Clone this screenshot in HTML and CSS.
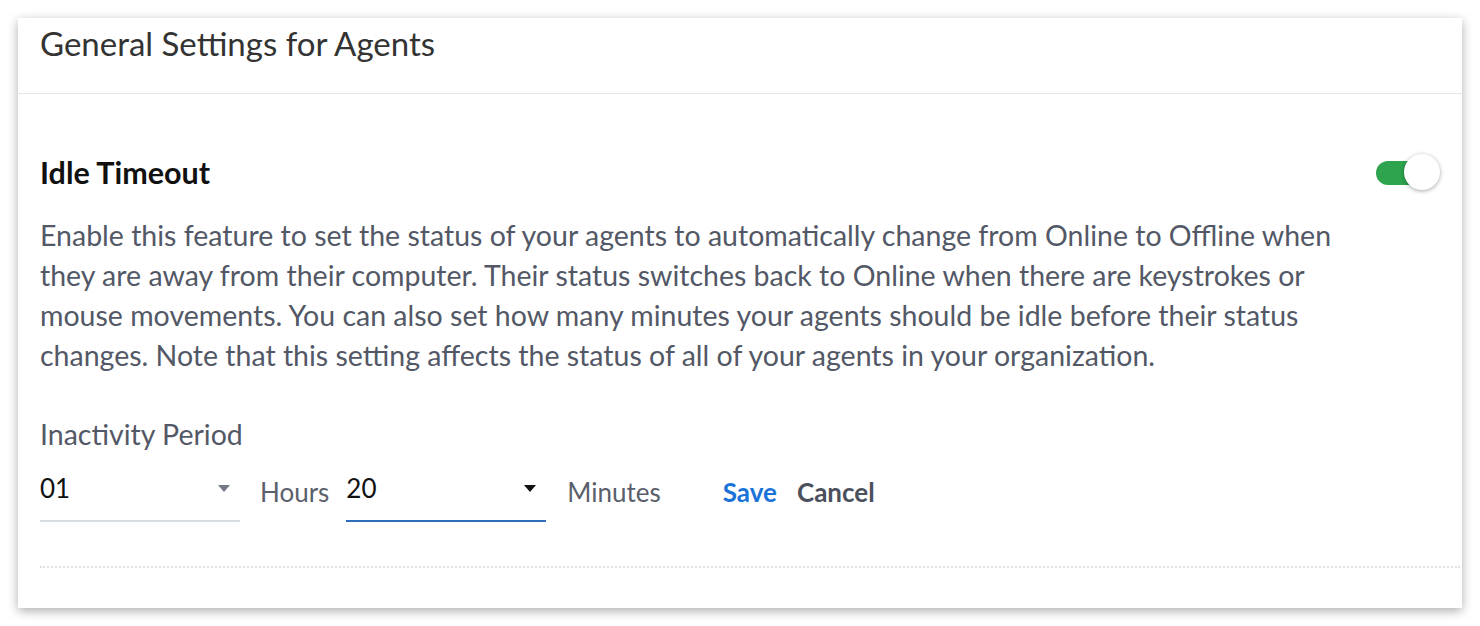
FILE: index.html
```html
<!DOCTYPE html>
<html>
<head>
<meta charset="utf-8">
<link rel="stylesheet" href="styles.css">
</head>
<body>
<div class="card">
  <div class="card-header">
    <h1 class="title">General Settings for Agents</h1>
  </div>
  <div class="card-body">
    <div class="setting-row">
      <h2 class="setting-title">Idle Timeout</h2>
      <div class="toggle">
        <span class="toggle-track"></span>
        <span class="toggle-knob"></span>
      </div>
    </div>
    <p class="desc">Enable this feature to set the status of your agents to automatically change from Online to Offline when they are away from their computer. Their status switches back to Online when there are keystrokes or mouse movements. You can also set how many minutes your agents should be idle before their status changes. Note that this setting affects the status of all of your agents in your organization.</p>
    <div class="field-label">Inactivity Period</div>
    <div class="input-row">
      <div class="select">
        <span class="select-value">01</span>
        <span class="arrow arrow-muted"></span>
      </div>
      <span class="unit unit-hours">Hours</span>
      <div class="select select-active">
        <span class="select-value">20</span>
        <span class="arrow"></span>
      </div>
      <span class="unit unit-minutes">Minutes</span>
      <a class="btn-link btn-save">Save</a>
      <a class="btn-link btn-cancel">Cancel</a>
    </div>
    <div class="dotted"></div>
  </div>
</div>
</body>
</html>
```

FILE: styles.css
```css
* { box-sizing: border-box; }
html, body { margin: 0; padding: 0; background: #ffffff; }
body {
  padding: 18px;
  font-family: Lato, "Noto Sans", "Liberation Sans", sans-serif;
}
.card {
  width: 1444px;
  height: 590px;
  background: #ffffff;
  box-shadow: 0 3px 10px rgba(0, 0, 0, 0.32);
}
.card-header {
  height: 76px;
  padding: 5px 22px 0 22px;
  border-bottom: 1px solid #e6e6e6;
}
.title {
  margin: 0;
  font-size: 33px;
  line-height: 40px;
  font-weight: 400;
  color: #333333;
}
.card-body {
  padding: 60px 22px 0 22px;
}
.setting-row {
  display: flex;
  justify-content: space-between;
  align-items: center;
  height: 36px;
}
.setting-title {
  margin: 0;
  font-size: 30.5px;
  line-height: 36px;
  font-weight: 700;
  color: #111111;
}
.toggle {
  position: relative;
  width: 64px;
  height: 36px;
}
.toggle-track {
  display: block;
  width: 59px;
  height: 24px;
  margin-top: 7px;
  border-radius: 12px;
  background: #2ea44f;
}
.toggle-knob {
  position: absolute;
  right: 0;
  top: 0;
  width: 36px;
  height: 36px;
  border-radius: 50%;
  background: #ffffff;
  box-shadow: 0 1px 4px rgba(0, 0, 0, 0.35);
}
.desc {
  margin: 25px 0 0 0;
  font-size: 28.5px;
  line-height: 40px;
  color: #535866;
  max-width: 1320px;
}
.field-label {
  margin-top: 42px;
  font-size: 28.5px;
  line-height: 34px;
  color: #535866;
}
.input-row {
  display: flex;
  align-items: flex-start;
  margin-top: 18px;
}
.select {
  display: flex;
  align-items: center;
  justify-content: space-between;
  width: 200px;
  height: 53px;
  padding: 0 10px 13px 0;
  border-bottom: 2px solid #d7dce1;
  align-self: flex-start;
}
.select-active { border-bottom-color: #2d6fba; }
.select-value {
  font-size: 26px;
  line-height: 38px;
  color: #111111;
  align-self: flex-start;
}
.arrow {
  width: 0;
  height: 0;
  border-left: 6.5px solid transparent;
  border-right: 6.5px solid transparent;
  border-top: 7px solid #111111;
  align-self: flex-start;
  margin-top: 16px;
}
.arrow-muted { border-top-color: #737886; }
.unit {
  font-size: 26px;
  line-height: 38px;
  margin-top: 4px;
  color: #5b5f6c;
}
.unit-hours { margin-left: 20px; margin-right: 17px; }
.unit-minutes { margin-left: 21px; margin-right: 62px; }
.btn-link {
  font-size: 26px;
  line-height: 38px;
  margin-top: 4px;
  font-weight: 700;
  cursor: pointer;
}
.btn-save { color: #1a73d9; margin-right: 20px; }
.btn-cancel { color: #4b505d; }
.dotted {
  margin-top: 44px;
  border-top: 2px dotted #e0e0e0;
  margin-right: -20px;
}
```
